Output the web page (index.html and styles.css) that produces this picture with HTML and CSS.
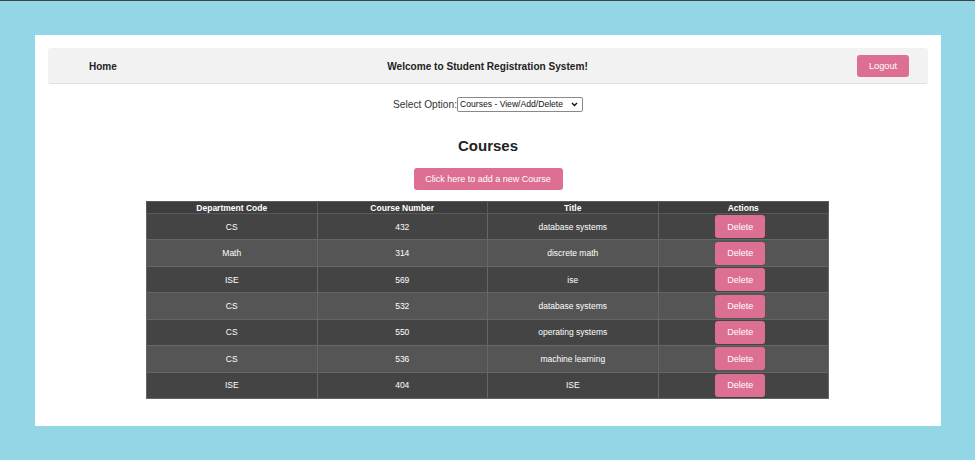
FILE: index.html
```html
<!DOCTYPE html>
<html>
<head>
<meta charset="utf-8">
<link rel="stylesheet" href="styles.css">
</head>
<body>
<div class="topline"></div>
<div class="panel">
  <nav class="navbar">
    <a class="home">Home</a>
    <span class="welcome">Welcome to Student Registration System!</span>
    <div class="right"><button class="btn logout">Logout</button></div>
  </nav>
  <div class="select-row">
    <label>Select Option:</label>
    <span class="select-wrap">
      <select class="opt"><option>Courses - View/Add/Delete</option></select>
      <svg class="chev" width="7" height="5" viewBox="0 0 7 5"><path d="M1 1 L3.5 3.5 L6 1" fill="none" stroke="#111" stroke-width="1.4"/></svg>
    </span>
  </div>
  <h2 class="heading">Courses</h2>
  <div class="add-row"><button class="btn add">Click here to add a new Course</button></div>
  <table class="courses">
    <thead>
      <tr><th>Department Code</th><th>Course Number</th><th>Title</th><th>Actions</th></tr>
    </thead>
    <tbody>
      <tr><td>CS</td><td>432</td><td>database systems</td><td><button class="btn del">Delete</button></td></tr>
      <tr><td>Math</td><td>314</td><td>discrete math</td><td><button class="btn del">Delete</button></td></tr>
      <tr><td>ISE</td><td>569</td><td>ise</td><td><button class="btn del">Delete</button></td></tr>
      <tr><td>CS</td><td>532</td><td>database systems</td><td><button class="btn del">Delete</button></td></tr>
      <tr><td>CS</td><td>550</td><td>operating systems</td><td><button class="btn del">Delete</button></td></tr>
      <tr><td>CS</td><td>536</td><td>machine learning</td><td><button class="btn del">Delete</button></td></tr>
      <tr><td>ISE</td><td>404</td><td>ISE</td><td><button class="btn del">Delete</button></td></tr>
    </tbody>
  </table>
</div>
</body>
</html>
```
FILE: styles.css
```css
html, body {
  margin: 0;
  padding: 0;
}
body {
  background: #93d7e7;
  font-family: "Liberation Sans", Arial, sans-serif;
  color: #222;
  height: 460px;
}
.topline {
  height: 1px;
  background: #3f4446;
}
.panel {
  background: #fff;
  margin: 34px 34px 0 35px;
  height: 391px;
  padding: 13px 13px 0 13px;
  box-sizing: border-box;
}
.navbar {
  height: 36px;
  background: #f2f2f2;
  border-radius: 3px;
  border-bottom: 1px solid #e0e0e0;
  box-sizing: border-box;
  display: grid;
  grid-template-columns: 1fr auto 1fr;
  align-items: center;
  padding: 1px 19px 0 41px;
}
.home {
  font-weight: bold;
  font-size: 10px;
  color: #222;
}
.welcome {
  text-align: center;
  font-weight: bold;
  font-size: 10.1px;
  color: #222;
  padding-right: 23px;
}
.right {
  display: flex;
  justify-content: flex-end;
  margin-top: -1px;
}
.btn {
  background: #dd6f92;
  color: #fff;
  border: none;
  border-radius: 3px;
  font-family: "Liberation Sans", Arial, sans-serif;
  cursor: pointer;
  padding: 0;
}
.logout {
  width: 52px;
  height: 22px;
  font-size: 9.2px;
}
.select-row {
  display: flex;
  justify-content: center;
  align-items: center;
  margin-top: 13px;
  height: 14px;
  font-size: 10.2px;
  color: #333;
}
.select-wrap {
  position: relative;
  display: inline-block;
  height: 15px;
}
.opt {
  appearance: none;
  -webkit-appearance: none;
  width: 126px;
  height: 15px;
  font-size: 8.6px;
  font-family: "Liberation Sans", Arial, sans-serif;
  border: 1px solid #888;
  border-radius: 2px;
  background: #fff;
  color: #111;
  padding: 0 0 0 2px;
  display: block;
}
.chev {
  position: absolute;
  right: 5px;
  top: 5px;
}
.heading {
  margin: 25px 0 0 0;
  text-align: center;
  font-size: 15px;
  font-weight: bold;
  color: #222;
  line-height: 20px;
}
.add-row {
  display: flex;
  justify-content: center;
  margin-top: 12px;
}
.add {
  width: 149px;
  height: 22px;
  font-size: 9px;
}
.courses {
  margin: 11px 0 0 98px;
  width: 683px;
  border-collapse: collapse;
  table-layout: fixed;
  font-size: 8.5px;
  color: #fff;
  border: 1px solid #5e5e5e;
}
.courses th, .courses td {
  border: 1px solid #666;
  text-align: center;
  padding: 0;
}
.courses th {
  background: #3d3d3d;
  font-weight: bold;
  height: 11px;
  line-height: 10px;
  font-size: 8.5px;
  border-color: #5a5a5a;
}
.courses td {
  height: 25.45px;
}
.courses tbody tr:nth-child(odd) td {
  background: #444;
}
.courses tbody tr:nth-child(even) td {
  background: #555;
}
.del {
  width: 50px;
  height: 23px;
  font-size: 9px;
  vertical-align: middle;
  margin-right: 6px;
}
```
